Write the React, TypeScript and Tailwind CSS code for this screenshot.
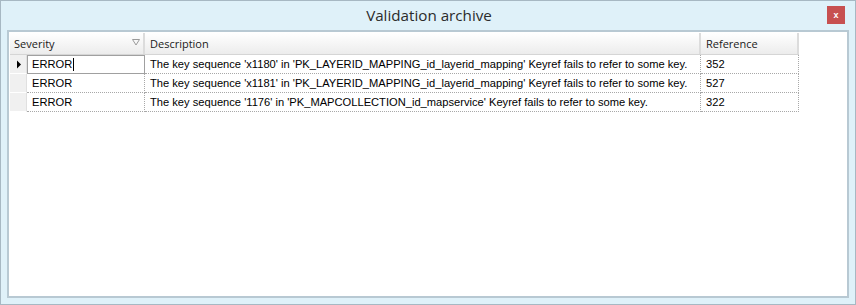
import React from "react";

const rows = [
  {
    sev: "ERROR",
    desc: "The key sequence 'x1180' in 'PK_LAYERID_MAPPING_id_layerid_mapping' Keyref fails to refer to some key.",
    ref: "352",
  },
  {
    sev: "ERROR",
    desc: "The key sequence 'x1181' in 'PK_LAYERID_MAPPING_id_layerid_mapping' Keyref fails to refer to some key.",
    ref: "527",
  },
  {
    sev: "ERROR",
    desc: "The key sequence '1176' in 'PK_MAPCOLLECTION_id_mapservice' Keyref fails to refer to some key.",
    ref: "322",
  },
];

const cellFont = { fontFamily: '"Liberation Sans", Arial, sans-serif' };
const uiFont = { fontFamily: '"Open Sans", "Noto Sans", sans-serif' };

export default function App() {
  return (
    <div className="w-[856px] h-[305px] bg-[#dff1f9] border border-[#a7b8c3] flex flex-col overflow-hidden">
      <div className="relative h-[29px] flex items-center justify-center shrink-0">
        <span className="text-[15.2px] text-[#2b2b2b] leading-none pl-[2px]" style={uiFont}>
          Validation archive
        </span>
        <div className="absolute right-[10px] top-[5px] w-[18px] h-[18px] bg-[#c75050] flex items-center justify-center">
          <span className="text-white text-[9px] font-bold leading-none" style={cellFont}>
            x
          </span>
        </div>
      </div>
      <div className="flex-1 mx-[6px] mb-[6px] bg-white border-2 border-[#b8c9d3] pl-px pt-px">
        <div className="w-[789px]">
          {/* header */}
          <div className="flex h-[22px] border-b border-[#d5d5d5] bg-gradient-to-b from-[#ffffff] to-[#ececec] text-[11px] text-[#1a1a1a]" style={uiFont}>
            <div className="w-[135px] relative flex items-center pl-[4px] pt-px border-r-2 border-r-[#dcdcdc]">
              Severity
              <svg className="absolute left-[122px] top-[6px]" width="8" height="7" viewBox="0 0 8 7">
                <path d="M0.5 0.5 H7.5 L4 6 Z" fill="none" stroke="#9a9a9a" strokeWidth="1" />
              </svg>
            </div>
            <div className="w-[556px] flex items-center pl-[5px] pt-px border-r-2 border-r-[#dcdcdc]">Description</div>
            <div className="w-[98px] flex items-center pl-[5px] pt-px border-r-2 border-r-[#dcdcdc]">Reference</div>
          </div>
          {rows.map((r, i) => (
            <div key={i} className="flex h-[19px] text-[11.15px] text-black" style={cellFont}>
              <div className="w-[17px] bg-[#f0f0f0] border-r border-[#e0e0e0] border-b border-b-white flex items-center justify-center pl-px">
                {i === 0 && (
                  <svg width="6" height="9" viewBox="0 0 6 9">
                    <path d="M1 0.5 L5 4.5 L1 8.5 Z" fill="#000" />
                  </svg>
                )}
              </div>
              {i === 0 ? (
                <div className="w-[118px] flex items-center pl-[4px] border border-[#a0a0a0]">
                  {r.sev}
                  <span className="inline-block w-px h-[13px] bg-black ml-px" />
                </div>
              ) : (
                <div className="w-[118px] flex items-center pl-[5px] border-r border-b border-dotted border-[#a8a8a8]">
                  {r.sev}
                </div>
              )}
              <div className="w-[556px] flex items-center pl-[5px] border-r border-b border-dotted border-[#a8a8a8] whitespace-nowrap overflow-hidden">
                {r.desc}
              </div>
              <div className="w-[98px] flex items-center pl-[5px] border-r border-b border-dotted border-[#a8a8a8]">
                {r.ref}
              </div>
            </div>
          ))}
        </div>
      </div>
    </div>
  );
}
